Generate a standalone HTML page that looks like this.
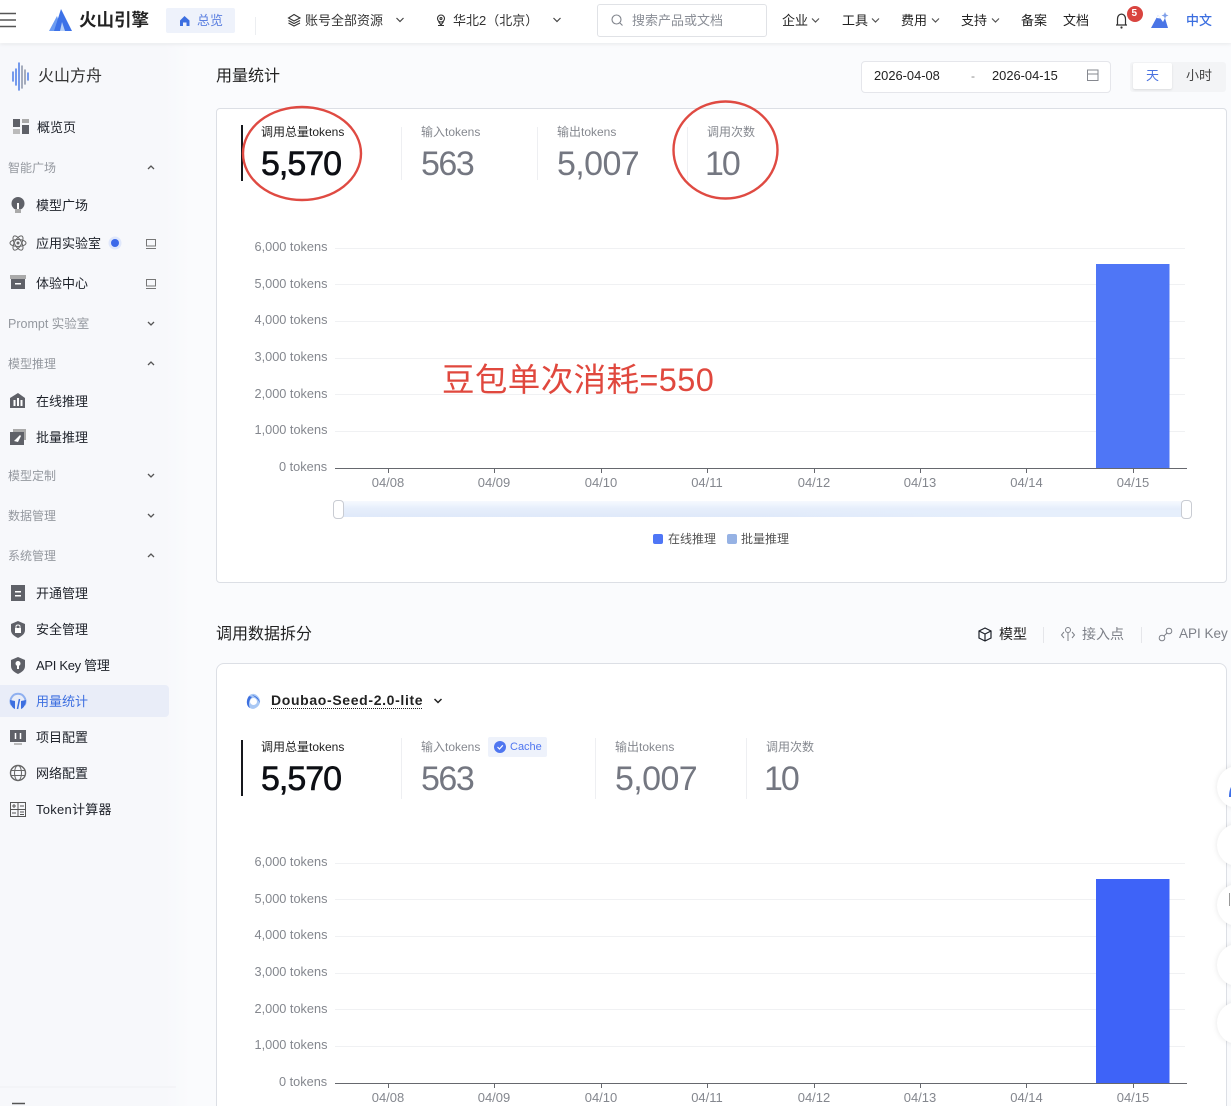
<!DOCTYPE html>
<html lang="zh"><head><meta charset="utf-8"><title>用量统计</title>
<style>
html,body{margin:0;padding:0;width:1231px;height:1106px;overflow:hidden;background:#fafbfd}
body{position:relative;font-family:"Liberation Sans","Noto Sans CJK SC",sans-serif;color:#1d2129;font-size:13px;filter:blur(.3px)}
.t{position:absolute;white-space:nowrap;line-height:20px;height:20px}
.b{position:absolute}
.side{color:#1d2129}
.sec{color:#94989f;font-size:12px}
.lab{font-size:12px;color:#85888f}
.val{font-size:34px;line-height:40px;height:40px;letter-spacing:-.6px;color:#747781}
.dark{color:#0d0f14;letter-spacing:-1px;-webkit-text-stroke:.6px #0d0f14}
.yl{font-size:13px;color:#84878e;right:904px;text-align:right;transform:scale(.98);transform-origin:right}
.xl{font-size:13px;color:#84878e;width:60px;text-align:center}
svg{position:absolute;left:0;top:0}
</style></head><body>
<div class="b" style="left:0;top:44px;width:190px;height:1062px;background:linear-gradient(90deg,#f7f8fb 0,#f7f8fb 165px,#fafbfd 190px)"></div>
<div class="b" style="left:0;top:0;width:1231px;height:43px;background:#fff;box-shadow:0 1px 4px rgba(0,0,0,.08)"></div>
<div class="b" style="left:166px;top:8px;width:69px;height:25px;background:#eef2fb;border-radius:2px"></div>
<div class="b" style="left:597px;top:4px;width:168px;height:31px;border:1px solid #e0e2e6;border-radius:3px;background:#fff"></div>
<div class="b" style="left:861px;top:61px;width:248px;height:30px;border:1px solid #e5e6eb;border-radius:4px;background:#fff"></div>
<div class="b" style="left:1130px;top:62px;width:96px;height:30px;background:#f3f4f6;border-radius:3px"></div>
<div class="b" style="left:1133px;top:63px;width:39px;height:26px;background:#fff;border-radius:2px;box-shadow:0 1px 2px rgba(0,0,0,.1)"></div>
<div class="b" style="left:216px;top:108px;width:1009px;height:473px;background:#fff;border:1px solid #dcdfe5;border-radius:4px"></div>
<div class="b" style="left:216px;top:663px;width:1009px;height:460px;background:#fff;border:1px solid #dcdfe5;border-radius:8px"></div>
<div class="b" style="left:0;top:685px;width:169px;height:32px;background:#e9edf8;border-radius:0 4px 4px 0"></div>
<div class="b" style="left:338px;top:501px;width:849px;height:16px;background:linear-gradient(180deg,#f6f9fe 0,#eef4fd 25%,#e6eefb 45%,#dfe9fa 100%)"></div>
<div class="b" style="left:760px;top:510px;width:427px;height:7px;background:linear-gradient(90deg,rgba(230,239,252,0),#e6effc 60%)"></div>
<div class="b" style="left:333px;top:500px;width:9px;height:17px;background:#fff;border:1px solid #c9ccd3;border-radius:4px"></div>
<div class="b" style="left:1181px;top:500px;width:9px;height:17px;background:#fff;border:1px solid #c9ccd3;border-radius:4px"></div>
<div class="b" style="left:653px;top:534px;width:10px;height:10px;background:#4f76f6;border-radius:2px"></div>
<div class="b" style="left:727px;top:534px;width:10px;height:10px;background:#96b2e4;border-radius:2px"></div>
<div class="b" style="left:488px;top:737px;width:59px;height:20px;background:#eef2fb;border-radius:2px"></div>
<div class="b" style="left:1217px;top:766px;width:40px;height:42px;background:#fff;border-radius:50%;box-shadow:0 0 6px rgba(0,0,0,.1)"></div>
<div class="b" style="left:1217px;top:824px;width:40px;height:42px;background:#fff;border-radius:50%;box-shadow:0 0 6px rgba(0,0,0,.1)"></div>
<div class="b" style="left:1217px;top:884px;width:40px;height:42px;background:#fff;border-radius:50%;box-shadow:0 0 6px rgba(0,0,0,.1)"></div>
<div class="b" style="left:1217px;top:944px;width:40px;height:42px;background:#fff;border-radius:50%;box-shadow:0 0 6px rgba(0,0,0,.1)"></div>
<div class="b" style="left:1217px;top:1002px;width:40px;height:42px;background:#fff;border-radius:50%;box-shadow:0 0 6px rgba(0,0,0,.1)"></div>

<svg width="1231" height="1106" viewBox="0 0 1231 1106" fill="none">
<!-- top bar -->
<path d="M0 13.500H16M0 20H16M0 26.500H16" stroke="#555" stroke-width="1.600"/>
<path d="M49 31 L57 16 L62 31Z" fill="#6c9cf2"/><path d="M54 31 L61 9 L72 31Z" fill="#3d72e8"/><path d="M60 31 L62 22 L65 31Z" fill="#b6cff7"/>
<path d="M180 20.500 L184.500 16 L189.500 20.500 V26 H186.500 V22.500 H183 V26 H180Z" fill="#3d6fe0"/>
<path d="M255.500 17V35" stroke="#eceef1"/>
<g stroke="#333" stroke-width="1.100"><path d="M294 14.500 L300 18 L294 21 L288.500 18Z"/><path d="M288.500 20.500 L294 23.500 L300 20.500M288.500 23 L294 26 L300 23"/></g>
<path d="M396.500 18 L400 21.500 L403.500 18M553.500 18 L557 21.500 L560.500 18" stroke="#444" stroke-width="1.200"/>
<g stroke="#333" stroke-width="1.100"><circle cx="441" cy="18.500" r="3.500"/><circle cx="441" cy="18.500" r="1"/><path d="M438.500 21.500 L441 25 L443.500 21.500M438 25.500H444"/></g>
<circle cx="616.500" cy="19.500" r="4.500" stroke="#80848c" stroke-width="1.100"/><path d="M620 23L622.500 25.500" stroke="#80848c" stroke-width="1.100"/>
<path d="M812 18.500 L815.500 22 L819 18.500M872 18.500 L875.500 22 L879 18.500M932 18.500 L935.500 22 L939 18.500M992 18.500 L995.500 22 L999 18.500" stroke="#555" stroke-width="1.200"/>
<path d="M1116 25 H1127 M1117.500 25 V19 C1117.500 12.500 1125.500 12.500 1125.500 19 V25" stroke="#333" stroke-width="1.200"/><circle cx="1121.500" cy="27.500" r="1.100" fill="#333"/>
<circle cx="1135" cy="14" r="8" fill="#d9443f"/>
<path d="M1151 28 L1158 15 L1163 22 L1165 18 L1168 28Z" fill="#4a75e6"/><path d="M1165 12 l1 2.500 2.500 1-2.500 1-1 2.500-1-2.500-2.500-1 2.500-1z" fill="#7f9fe9"/><path d="M1156.500 18 L1158 15 L1160.500 18.500Z" fill="#fff"/>
<rect x="1087.500" y="70" width="10.500" height="10.500" stroke="#85888f"/><path d="M1087.500 74H1098" stroke="#85888f"/>
<!-- sidebar logo -->
<g stroke-linecap="round" stroke-width="1.500"><path d="M13 72V81M16 69V85M19 63V90" stroke="#4a7be8"/><path d="M22 66V88M25 70V84" stroke="#8a93a8"/><path d="M28 73V80" stroke="#4a7be8"/></g>
<!-- sidebar icons -->
<g fill="#5f6168">
<rect x="13" y="119" width="7" height="8"/><rect x="22" y="119" width="7" height="4" fill="#aaa"/><rect x="13" y="129" width="7" height="5" fill="#bbb"/><rect x="22" y="125" width="7" height="9"/>
<circle cx="18" cy="203.500" r="6.500"/><rect x="15" y="209" width="6" height="4" fill="#aaa"/><rect x="17" y="203" width="2" height="6" fill="#fff"/>
<rect x="10" y="275" width="16" height="4" fill="#aaa"/><rect x="11" y="279" width="14" height="10"/><rect x="15" y="283" width="6" height="1.500" fill="#fff"/>
<path d="M18 393 L25 398 V408 H10 V398Z"/><rect x="13.500" y="400" width="2" height="6" fill="#fff"/><rect x="17" y="398" width="2" height="8" fill="#fff"/><rect x="20.500" y="400" width="2" height="6" fill="#fff"/>
<rect x="13" y="429" width="13" height="11" fill="#aaa"/><rect x="10" y="432" width="14" height="13"/><path d="M14 441 L20 435 L21 436 L18 442Z" fill="#fff"/>
<rect x="11" y="585" width="14" height="16"/><rect x="15" y="591" width="6" height="1.500" fill="#fff"/><rect x="15" y="595" width="6" height="1.500" fill="#fff"/>
<path d="M18 621 L25 624 V630 C25 634 22 636 18 638 C14 636 11 634 11 630 V624Z"/><rect x="15" y="628" width="6" height="5" fill="#fff"/><path d="M16 628 V626.500 C16 624.500 20 624.500 20 626.500 V628" stroke="#fff"/>
<path d="M18 657 L25 660 V666 C25 670 22 672 18 674 C14 672 11 670 11 666 V660Z"/><circle cx="18" cy="663.500" r="2.500" fill="#fff"/><rect x="17" y="665" width="2" height="4" fill="#fff"/>
<rect x="10" y="730" width="16" height="12"/><rect x="14" y="743" width="8" height="2" fill="#bbb"/><path d="M15.500 733V739M20.500 733V739" stroke="#fff" stroke-width="1.500"/>
</g>
<g stroke="#666" stroke-width="1"><ellipse cx="18" cy="243" rx="8" ry="3.500"/><ellipse cx="18" cy="243" rx="8" ry="3.500" transform="rotate(60 18 243)"/><ellipse cx="18" cy="243" rx="8" ry="3.500" transform="rotate(-60 18 243)"/></g><circle cx="18" cy="243" r="1.500" fill="#666"/>
<circle cx="115" cy="243" r="6.500" fill="#dfe7fb"/><circle cx="115" cy="243" r="4" fill="#3a68ea"/>
<g stroke="#777"><rect x="146.500" y="239.500" width="9" height="6.500"/><path d="M146 248.500H156"/><rect x="146.500" y="279.500" width="9" height="6.500"/><path d="M146 288.500H156"/></g>
<path d="M148 169 L151 166 L154 169M148 365 L151 362 L154 365M148 557 L151 554 L154 557M148 322 L151 325 L154 322M148 474 L151 477 L154 474M148 514 L151 517 L154 514" stroke="#555" stroke-width="1.300"/>
<path d="M11.500 705 A7.500 7.500 0 1 1 24.500 705" stroke="#8fb0f0" stroke-width="2"/><path d="M10 700 L15 701 L15 709 C12 708 10 704 10 700Z M26 700 L21 701 L21 709 C24 708 26 704 26 700Z" fill="#3d6fe0"/><path d="M17.500 709 L19.500 699" stroke="#3d6fe0" stroke-width="1.500"/>
<g stroke="#666"><circle cx="18" cy="773" r="7.500" stroke-width="1.400"/><ellipse cx="18" cy="773" rx="3.500" ry="7.500"/><path d="M10.500 770.500H25.500M10.500 775.500H25.500"/></g>
<g stroke="#555"><rect x="10.500" y="802.500" width="15" height="14"/><path d="M18 802V817M10 809.500H26"/></g>
<g stroke="#555" stroke-width="1"><path d="M12 806H16M14 804V808M20 806H24M12 813H16M20 812H24M20 814.500H24"/></g>
<path d="M12 1103.500H25" stroke="#555" stroke-width="1.500"/><path d="M0 1087H176" stroke="#eff0f3"/>
<!-- stat bars and dividers -->
<path d="M242 125V181M242 740V796" stroke="#16181d" stroke-width="2"/>
<path d="M401.500 127V180M537.500 127V180M687.500 127V180M401.500 738V799M595.500 738V799M746.500 738V799" stroke="#eeeff2"/>
<path d="M1043.500 627V643M1141.500 627V643" stroke="#e5e6ea"/>
<!-- chart 1 -->
<path d="M335 248.500H1185M335 284.500H1185M335 321.500H1185M335 358.500H1185M335 394.500H1185M335 431.500H1185" stroke="#f0f1f3"/>
<rect x="1096" y="264" width="73.500" height="204" fill="#4f76f6"/>
<path d="M335 468.500H1187" stroke="#66686e"/>
<path d="M388.500 468V473M494.500 468V473M601.500 468V473M707.500 468V473M814.500 468V473M920.500 468V473M1026.500 468V473M1133.500 468V473" stroke="#66686e"/>
<!-- chart 2 -->
<path d="M335 863.500H1185M335 899.500H1185M335 936.500H1185M335 973.500H1185M335 1009.500H1185M335 1046.500H1185" stroke="#f0f1f3"/>
<rect x="1096" y="879" width="73.500" height="204" fill="#3e63f8"/>
<path d="M335 1083.500H1187" stroke="#66686e"/>
<path d="M388.500 1083V1088M494.500 1083V1088M601.500 1083V1088M707.500 1083V1088M814.500 1083V1088M920.500 1083V1088M1026.500 1083V1088M1133.500 1083V1088" stroke="#66686e"/>
<!-- tabs icons -->
<g stroke="#1d2129" stroke-width="1.200"><path d="M985 628 L991 631 V638 L985 641 L979 638 V631Z"/><path d="M979 631 L985 634 L991 631M985 634V641"/></g>
<g stroke="#7d8088"><circle cx="1068" cy="630" r="2.500"/><path d="M1068 633V641M1064 632 L1061.500 635 L1064 638M1072 632 L1074.500 635 L1072 638"/></g>
<g stroke="#7d8088"><circle cx="1162" cy="638" r="2.800"/><circle cx="1169" cy="631" r="2.800"/><path d="M1164 636 L1167 633"/></g>
<!-- doubao -->
<path d="M249 696 C252 692 258 694 260 700 C261 706 254 711 250 708 C246 706 246 699 249 696Z" fill="#a9c8f4"/><path d="M249 696 C246 700 246 706 250 708 C248 704 249 700 252 697Z" fill="#3d6fe0"/><path d="M252 695 C256 696 259 698 260 703 C258 699 255 697 252 695Z" fill="#3d6fe0"/><circle cx="253.500" cy="701.500" r="3.500" fill="#fff"/>
<path d="M271 708.500H423" stroke="#222" stroke-dasharray="1 1"/>
<path d="M434.500 699 L438 702.500 L441.500 699" stroke="#222" stroke-width="1.500"/>
<circle cx="500" cy="747" r="6" fill="#4f76f0"/><path d="M497.500 747 L499.500 749 L502.800 745.300" stroke="#fff" stroke-width="1.200"/>
<path d="M1229 797 C1229 792 1230 789 1231 787 V797Z" fill="#3e6fe8"/>
<path d="M1229.500 893V906" stroke="#999"/>
<!-- annotation circles -->
<ellipse cx="302" cy="153.500" rx="59" ry="46.500" stroke="#df4a42" stroke-width="2.400"/>
<ellipse cx="725.500" cy="150" rx="52" ry="48.500" stroke="#df4a42" stroke-width="2.400"/>
</svg>

<!-- top text -->
<div class="t" style="left:79px;top:10px;font-size:17.500px;font-weight:700;color:#222">火山引擎</div>
<div class="t" style="left:197px;top:11px;color:#5b7fe0">总览</div>
<div class="t" style="left:305px;top:11px;color:#333">账号全部资源</div>
<div class="t" style="left:453px;top:11px;color:#333">华北2（北京）</div>
<div class="t" style="left:632px;top:11px;color:#8a8e96">搜索产品或文档</div>
<div class="t" style="left:782px;top:11px;color:#222">企业</div>
<div class="t" style="left:842px;top:11px;color:#222">工具</div>
<div class="t" style="left:901px;top:11px;color:#222">费用</div>
<div class="t" style="left:961px;top:11px;color:#222">支持</div>
<div class="t" style="left:1021px;top:11px;color:#222">备案</div>
<div class="t" style="left:1063px;top:11px;color:#222">文档</div>
<div class="t" style="left:1131.500px;top:4px;color:#fff;font-size:10px;font-weight:700">5</div>
<div class="t" style="left:1186px;top:11px;color:#3b6ee0;font-weight:500">中文</div>
<!-- sidebar text -->
<div class="t" style="left:38px;top:67px;font-size:16px;color:#333">火山方舟</div>
<div class="t side" style="left:37px;top:118px">概览页</div>
<div class="t sec" style="left:8px;top:158px">智能广场</div>
<div class="t side" style="left:36px;top:196px">模型广场</div>
<div class="t side" style="left:36px;top:234px">应用实验室</div>
<div class="t side" style="left:36px;top:274px">体验中心</div>
<div class="t sec" style="left:8px;top:314px;font-size:12.500px">Prompt 实验室</div>
<div class="t sec" style="left:8px;top:354px">模型推理</div>
<div class="t side" style="left:36px;top:392px">在线推理</div>
<div class="t side" style="left:36px;top:428px">批量推理</div>
<div class="t sec" style="left:8px;top:466px">模型定制</div>
<div class="t sec" style="left:8px;top:506px">数据管理</div>
<div class="t sec" style="left:8px;top:546px">系统管理</div>
<div class="t side" style="left:36px;top:584px">开通管理</div>
<div class="t side" style="left:36px;top:620px">安全管理</div>
<div class="t side" style="left:36px;top:656px;letter-spacing:-.3px">API Key 管理</div>
<div class="t" style="left:36px;top:692px;color:#3d6fe0">用量统计</div>
<div class="t side" style="left:36px;top:728px">项目配置</div>
<div class="t side" style="left:36px;top:764px">网络配置</div>
<div class="t side" style="left:36px;top:800px;letter-spacing:.25px">Token计算器</div>
<!-- header 1 -->
<div class="t" style="left:216px;top:67px;font-size:16px;color:#222">用量统计</div>
<div class="t" style="left:874px;top:66px;font-size:13px;color:#222;transform:scaleX(.99);transform-origin:left">2026-04-08</div>
<div class="t" style="left:971px;top:66px;font-size:12px;color:#888">-</div>
<div class="t" style="left:992px;top:66px;font-size:13px;color:#222;transform:scaleX(.99);transform-origin:left">2026-04-15</div>
<div class="t" style="left:1146px;top:66px;color:#4a72e0">天</div>
<div class="t" style="left:1186px;top:66px;color:#444">小时</div>
<!-- stats 1 -->
<div class="t lab" style="left:261px;top:122px;color:#222">调用总量tokens</div>
<div class="t val dark" style="left:261px;top:144px">5,570</div>
<div class="t lab" style="left:421px;top:122px">输入tokens</div>
<div class="t val" style="left:421px;top:144px;letter-spacing:-1.500px">563</div>
<div class="t lab" style="left:557px;top:122px">输出tokens</div>
<div class="t val" style="left:557px;top:144px">5,007</div>
<div class="t lab" style="left:707px;top:122px">调用次数</div>
<div class="t val" style="left:705px;top:144px;letter-spacing:-2px">10</div>
<!-- chart 1 text -->
<div class="t yl" style="top:237px">6,000 tokens</div>
<div class="t yl" style="top:274px">5,000 tokens</div>
<div class="t yl" style="top:310px">4,000 tokens</div>
<div class="t yl" style="top:347px">3,000 tokens</div>
<div class="t yl" style="top:384px">2,000 tokens</div>
<div class="t yl" style="top:420px">1,000 tokens</div>
<div class="t yl" style="top:457px">0 tokens</div>
<div class="t xl" style="left:358px;top:473px">04/08</div>
<div class="t xl" style="left:464px;top:473px">04/09</div>
<div class="t xl" style="left:571px;top:473px">04/10</div>
<div class="t xl" style="left:677px;top:473px">04/11</div>
<div class="t xl" style="left:784px;top:473px">04/12</div>
<div class="t xl" style="left:890px;top:473px">04/13</div>
<div class="t xl" style="left:996.500px;top:473px">04/14</div>
<div class="t xl" style="left:1103px;top:473px">04/15</div>
<div class="t" style="left:668px;top:529px;font-size:12px;color:#555">在线推理</div>
<div class="t" style="left:741px;top:529px;font-size:12px;color:#555">批量推理</div>
<div class="t" style="left:442px;top:360px;font-size:32.500px;line-height:40px;height:40px;color:#e0483e;letter-spacing:.4px">豆包单次消耗=550</div>
<!-- section 2 -->
<div class="t" style="left:216px;top:625px;font-size:16px;color:#222">调用数据拆分</div>
<div class="t" style="left:999px;top:624px;font-size:14px;color:#222">模型</div>
<div class="t" style="left:1082px;top:624px;font-size:14px;color:#7d8088">接入点</div>
<div class="t" style="left:1179px;top:624px;color:#7d8088;font-size:13.500px">API Key</div>
<div class="t" style="left:271px;top:690px;font-size:14px;font-weight:700;color:#222;letter-spacing:.65px">Doubao-Seed-2.0-lite</div>
<div class="t lab" style="left:261px;top:737px;color:#222">调用总量tokens</div>
<div class="t val dark" style="left:261px;top:759px">5,570</div>
<div class="t lab" style="left:421px;top:737px">输入tokens</div>
<div class="t" style="left:510px;top:737px;font-size:11px;color:#4f76f0">Cache</div>
<div class="t val" style="left:421px;top:759px;letter-spacing:-1.500px">563</div>
<div class="t lab" style="left:615px;top:737px">输出tokens</div>
<div class="t val" style="left:615px;top:759px">5,007</div>
<div class="t lab" style="left:766px;top:737px">调用次数</div>
<div class="t val" style="left:764px;top:759px;letter-spacing:-2px">10</div>
<div class="t yl" style="top:852px">6,000 tokens</div>
<div class="t yl" style="top:889px">5,000 tokens</div>
<div class="t yl" style="top:925px">4,000 tokens</div>
<div class="t yl" style="top:962px">3,000 tokens</div>
<div class="t yl" style="top:999px">2,000 tokens</div>
<div class="t yl" style="top:1035px">1,000 tokens</div>
<div class="t yl" style="top:1072px">0 tokens</div>
<div class="t xl" style="left:358px;top:1088px">04/08</div>
<div class="t xl" style="left:464px;top:1088px">04/09</div>
<div class="t xl" style="left:571px;top:1088px">04/10</div>
<div class="t xl" style="left:677px;top:1088px">04/11</div>
<div class="t xl" style="left:784px;top:1088px">04/12</div>
<div class="t xl" style="left:890px;top:1088px">04/13</div>
<div class="t xl" style="left:996.500px;top:1088px">04/14</div>
<div class="t xl" style="left:1103px;top:1088px">04/15</div>
</body></html>
